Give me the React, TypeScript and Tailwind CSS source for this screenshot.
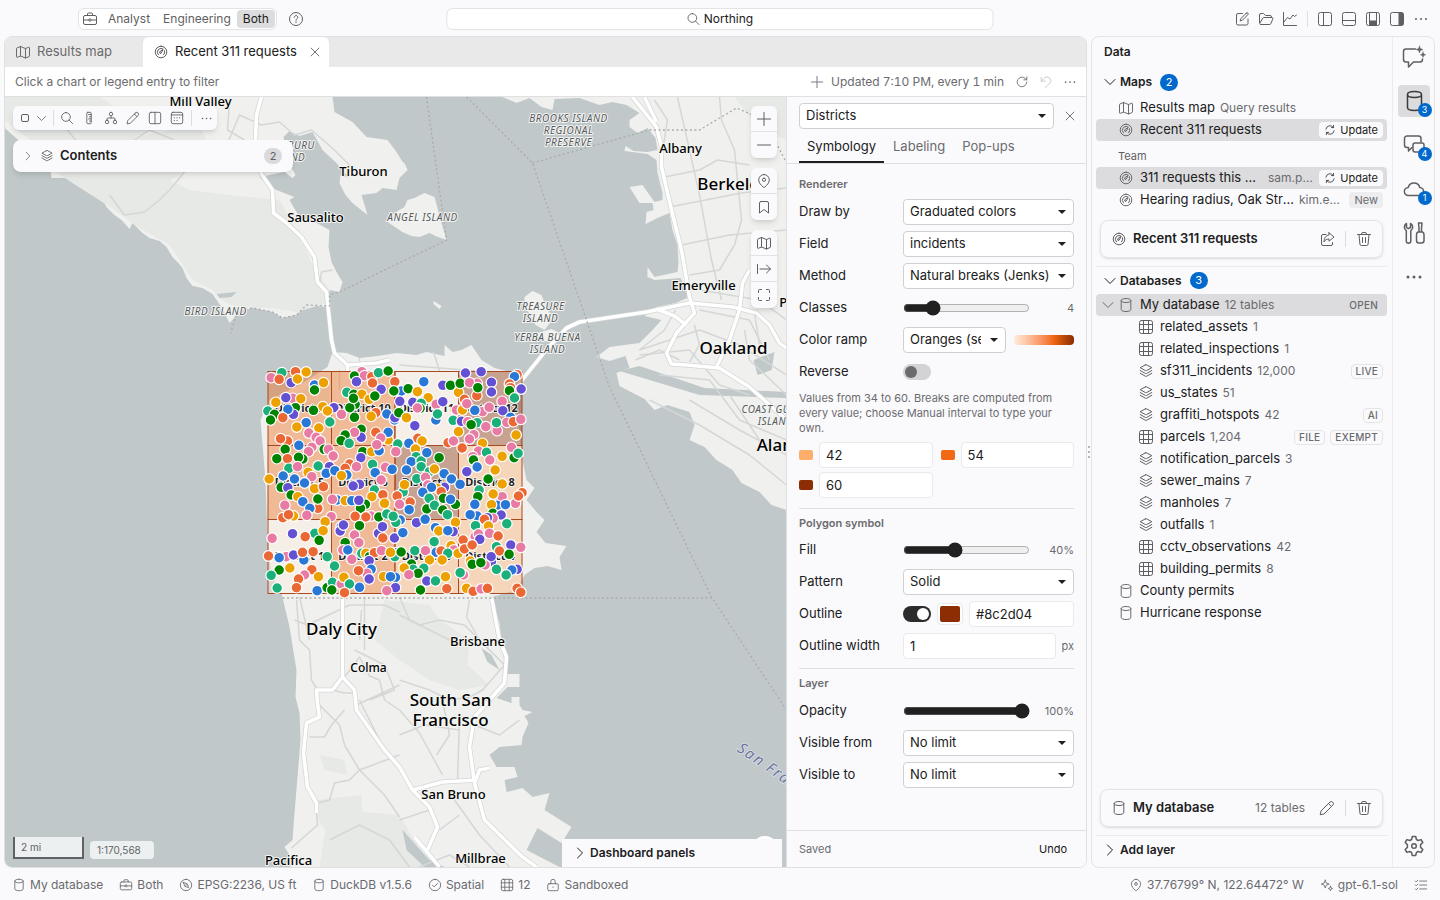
import React, { useState } from "react";
import clsx from "clsx";

const ICONS: Record<string, string> = {
  map: "M5.5 2.5 1.9 4a.6.6 0 0 0-.4.6v8.2c0 .4.4.7.8.5l3.2-1.3 5 2 3.6-1.5a.6.6 0 0 0 .4-.6V3.7c0-.4-.4-.7-.8-.5l-3.2 1.3-5-2ZM5.5 2.5V12M10.5 4.5V14",
  dashboard:
    "M8 2.2a5.8 5.8 0 1 0 0 11.6A5.800 5.800 0 0 0 8 2.200ZM5.400 10.800a3.800 3.800 0 0 1 4-6.200M11.500 6.700a3.800 3.800 0 0 1-.9 4.100M7.400 9.300a1 1 0 0 1-.7-1.500l3.500-2.500-1.900 3.700a1 1 0 0 1-.9.300Z",
  close: "m3.5 3.5 9 9M12.5 3.5l-9 9",
  help: "M8 1.5a6.5 6.5 0 1 0 0 13 6.5 6.5 0 0 0 0-13ZM6.2 6.3a1.8 1.8 0 1 1 2.7 1.6c-.6.3-.9.7-.9 1.4M8 10.9v.8",
  briefcase:
    "M3 4.5h10A1.5 1.5 0 0 1 14.5 6v6a1.5 1.5 0 0 1-1.5 1.500H3A1.500 1.500 0 0 1 1.500 12V6A1.500 1.500 0 0 1 3 4.500ZM5.500 4.500V3a1 1 0 0 1 1-1h3a1 1 0 0 1 1 1v1.500M1.500 9h5M9.500 9h5M6.800 9a1.200 1.200 0 1 0 2.400 0 1.200 1.200 0 1 0-2.400 0",
  search: "M6.800 1.800a5 5 0 1 0 0 10 5 5 0 0 0 0-10ZM10.400 10.400l4 4",
  edit: "M8.500 2.500H4A1.500 1.500 0 0 0 2.500 4v8.500A1.500 1.500 0 0 0 4 14h8.500a1.500 1.500 0 0 0 1.500-1.500V8M12.300 2.100a1 1 0 0 1 1.600 1.500L8.500 9.200l-2.300.8.700-2.400 5.400-5.500Z",
  folder:
    "M1.500 11.500V4A1.500 1.500 0 0 1 3 2.500h2.500L7.500 4.500H12A1.500 1.500 0 0 1 13.500 6v.500M3 13.500h8.800a1 1 0 0 0 .9-.6l2-4.600a1.300 1.300 0 0 0-1.200-1.800H5.700a1 1 0 0 0-.9.600L1.800 12.200A1 1 0 0 0 3 13.500Z",
  graph: "M1.500 1.500v13h13M2 11l3.500-4.500L8 8l3-4 1.500 1.500L14.500 4",
  columns:
    "M3.500 1.500h9a2 2 0 0 1 2 2v9a2 2 0 0 1-2 2h-9a2 2 0 0 1-2-2v-9a2 2 0 0 1 2-2ZM6.500 1.500v13",
  split:
    "M3.500 1.500h9a2 2 0 0 1 2 2v9a2 2 0 0 1-2 2h-9a2 2 0 0 1-2-2v-9a2 2 0 0 1 2-2ZM8 1.500v13",
  panel:
    "M3.500 1.500h9a2 2 0 0 1 2 2v9a2 2 0 0 1-2 2h-9a2 2 0 0 1-2-2v-9a2 2 0 0 1 2-2ZM1.500 9.500h13",
  frame:
    "M3.500 1.500h9a2 2 0 0 1 2 2v9a2 2 0 0 1-2 2h-9a2 2 0 0 1-2-2v-9a2 2 0 0 1 2-2Z",
  plus: "M8 1.500v13M1.500 8h13",
  minus: "M1.500 8h13",
  refresh: "M13.500 8a5.500 5.500 0 1 1-1.800-4.100L13.500 5.500M13.500 2v3.500H10",
  sync: "M2.500 7A5.600 5.600 0 0 1 12.500 4.500M12.800 1.800v3H9.800M13.500 9a5.600 5.600 0 0 1-10 2.500M3.200 14.200v-3h3",
  undo: "M2.500 2.500v4.500H7M2.500 7l3.700-3.500a4.200 4.200 0 1 1 6 6L7 14.500",
  down: "m3 5.500 5 5 5-5",
  right: "m5.500 3 5 5-5 5",
  layers:
    "M7.500 1.800a1 1 0 0 1 1 0L13.800 4.700 8.500 7.600a1 1 0 0 1-1 0L2.200 4.700l5.300-2.900ZM2.200 7.500l5.300 3a1 1 0 0 0 1 0l5.300-3M2.200 10.300l5.300 3a1 1 0 0 0 1 0l5.300-3",
  ruler:
    "M6.500 1.500h3a1 1 0 0 1 1 1v11a1 1 0 0 1-1 1h-3a1 1 0 0 1-1-1v-11a1 1 0 0 1 1-1ZM7.500 4h3M8.500 6.500h2M7.500 9h3M8.500 11.500h2",
  tree: "M8 1.500a2 2 0 1 0 0 4 2 2 0 0 0 0-4ZM3.500 10.500a2 2 0 1 0 0 4 2 2 0 0 0 0-4ZM12.500 10.500a2 2 0 1 0 0 4 2 2 0 0 0 0-4ZM8 5.500V8M3.500 10.500V9a1 1 0 0 1 1-1h7a1 1 0 0 1 1 1v1.500",
  pencil:
    "M10.800 2.200a2.100 2.100 0 0 1 3 3L5 14l-3.800.8L2 11l8.800-8.800ZM9.500 3.500l3 3",
  calendar:
    "M3.500 1.500h9a2 2 0 0 1 2 2v9a2 2 0 0 1-2 2h-9a2 2 0 0 1-2-2v-9a2 2 0 0 1 2-2ZM1.500 4.500h13M4.800 7.800h.4M7.800 7.800h.4M10.800 7.800h.4M4.800 10.800h.4M7.800 10.800h.4",
  pin: "M8 1.500a5.300 5.300 0 0 1 5.300 5.300c0 2.800-2 5-4.500 7.300a1.200 1.200 0 0 1-1.600 0C4.700 11.800 2.700 9.600 2.700 6.800A5.300 5.300 0 0 1 8 1.500ZM8 5.200a1.600 1.600 0 1 0 0 3.200 1.600 1.600 0 0 0 0-3.200Z",
  bookmark: "M5 2.500h6A1.500 1.500 0 0 1 12.500 4v10L8 10.500 3.500 14V4A1.500 1.500 0 0 1 5 2.500Z",
  tab: "M1.500 3.500v9M4 8h10.500M10.500 4l4 4-4 4",
  fullscreen:
    "M2.500 5.500v-2a1 1 0 0 1 1-1h2M10.500 2.500h2a1 1 0 0 1 1 1v2M13.500 10.500v2a1 1 0 0 1-1 1h-2M5.500 13.500h-2a1 1 0 0 1-1-1v-2",
  database:
    "M8 1.500c2.800 0 4.800.8 4.800 2s-2 2-4.800 2-4.800-.8-4.800-2 2-2 4.800-2ZM3.200 3.500v9c0 1.200 2 2 4.800 2s4.800-.8 4.800-2v-9",
  table:
    "M3.500 1.500h9a2 2 0 0 1 2 2v9a2 2 0 0 1-2 2h-9a2 2 0 0 1-2-2v-9a2 2 0 0 1 2-2ZM1.500 5.500h13M1.500 10.500h13M5.500 1.500v13M10.500 1.500v13",
  share:
    "M7 3.500H4A1.500 1.500 0 0 0 2.500 5v8A1.500 1.500 0 0 0 4 14.500h8A1.500 1.500 0 0 0 13.500 13v-1.500M10 1.800 15 6l-5 4.200V8C7.500 8 6 9 5 11c0-4 2-6.700 5-7V1.800Z",
  trash:
    "M1.500 3.500h13M5.500 3.500V3a1.500 1.500 0 0 1 1.500-1.500h2A1.500 1.500 0 0 1 10.500 3v.500M3 3.500l.9 9.500A1.500 1.500 0 0 0 5.400 14.500h5.200a1.500 1.500 0 0 0 1.500-1.500L13 3.500M6.500 6.500v5M9.500 6.500v5",
  compass:
    "M8 1.500a6.500 6.500 0 1 0 0 13 6.500 6.500 0 0 0 0-13ZM5 5l4.500 1.700L11 11 6.600 9.500 5 5ZM7.500 8h1",
  check: "M8 1.500a6.500 6.500 0 1 0 0 13 6.500 6.500 0 0 0 0-13ZM5 8.200l2 2 4-4",
  lock: "M3.500 6.500h9A1.500 1.500 0 0 1 14 8v5a1.500 1.500 0 0 1-1.500 1.500h-9A1.500 1.500 0 0 1 2 13V8a1.500 1.500 0 0 1 1.500-1.500ZM5.500 6.500V4a2.500 2.500 0 0 1 5 0v2.500M8 10.200v.600",
  sparkle:
    "M6 2.500 7.200 5.800 10.500 7 7.200 8.200 6 11.500 4.800 8.200 1.500 7l3.300-1.200L6 2.500ZM12 9.500l.7 1.800 1.800.7-1.800.7-.7 1.800-.7-1.800-1.800-.7 1.800-.7.7-1.800Z",
  checklist: "M6.500 3.500h8M6.500 8h8M6.500 12.500h8M1.500 3.500l1 1 2-2M1.500 8l1 1 2-2M1.500 12.500l1 1 2-2",
};

function Icon({ name, size = 16, className }: { name: string; size?: number; className?: string }) {
  return (
    <svg
      viewBox="0 0 16 16"
      width={size}
      height={size}
      fill="none"
      stroke="currentColor"
      strokeWidth="1"
      strokeLinecap="round"
      strokeLinejoin="round"
      className={clsx("shrink-0", className)}
      aria-hidden="true"
    >
      <path d={ICONS[name]} />
    </svg>
  );
}

function Dots({ size = 14 }: { size?: number }) {
  return (
    <svg viewBox="0 0 16 16" width={size} height={size} fill="currentColor" className="shrink-0" aria-hidden="true">
      <circle cx="3" cy="8" r="1" />
      <circle cx="8" cy="8" r="1" />
      <circle cx="13" cy="8" r="1" />
    </svg>
  );
}

/* ---------- map ---------- */

const DOT_COLORS: Record<string, string> = {
  p: "#e87ba4",
  o: "#eb6834",
  y: "#eda100",
  g: "#008300",
  t: "#1baf7a",
  b: "#2a78d6",
  v: "#6350d2",
};

// colour key followed by x,y in thirds of a pixel, measured from the grid's corner
const INCIDENTS =
  "t82,38 o123,35 p50,53 o74,58 y155,36 v110,68 y129,57 b180,75 g180,90 y207,68 p322,35 g300,48 p330,47 o352,50 t372,38 g401,33 v306,65 o354,69 o421,65 v380,88 t277,97 g298,103 y322,103 y344,118 g361,108 b508,65 b441,93 g418,93 g461,86 y489,95 y521,113 v565,76 y612,97 g588,76 g617,70 v633,39 v680,35 p668,70 p645,68 o667,107 g670,83 v711,67 v711,96 o788,44 b780,50 o765,72 o768,83 v800,87 g765,92 t780,114 p743,124 " +
  "p115,115 v94,113 y64,127 y139,116 g123,143 v117,163 b100,148 t40,153 g60,163 g48,180 o85,173 y205,140 v238,143 g177,151 y219,153 p261,163 b155,188 t226,186 y127,201 y193,204 p163,219 g302,133 g286,143 g297,115 g300,172 o364,158 y350,169 b397,162 b420,180 v421,173 g433,158 y456,173 v436,124 v475,127 t500,130 g497,145 p489,144 b544,180 p545,133 t549,162 v565,125 v481,197 o630,118 p606,150 y624,150 p637,131 p684,155 b661,151 p704,142 v745,152 " +
  "t596,181 v621,184 p640,185 t668,188 g650,194 p694,200 p728,212 t726,188 b768,172 p757,187 o777,185 p799,178 y785,225 y612,215 p658,224 p645,237 o581,248 p597,243 y684,250 o623,264 p771,262 g779,293 t791,280 y743,289 p672,273 t696,277 p655,290 g657,300 p706,300 b668,321 y722,330 v637,335 " +
  "o99,243 o78,236 p185,232 p197,243 g92,268 b133,256 p172,262 g209,268 p162,275 g67,296 o99,296 g145,297 g132,292 t103,325 p129,320 p222,268 p236,288 t191,318 g320,208 v320,232 p300,217 g272,225 g260,242 t284,250 o364,217 y401,240 b401,217 p379,234 g325,275 y352,275 b374,272 p367,254 t430,252 p424,275 o490,235 b463,250 y503,243 y483,267 g554,293 " +
  "t485,290 b470,305 t500,303 b517,278 v319,293 o285,312 o272,325 p306,320 t354,313 p393,322 b362,338 b413,328 t500,320 b456,330 t525,335 y540,327 b569,341 t487,356 p513,352 b591,357 b617,373 " +
  "y44,357 b86,348 b120,357 g80,382 v100,383 y161,337 p172,350 b150,369 v225,320 b215,340 b241,332 b277,345 y261,347 y180,386 o207,380 g110,405 y130,410 p91,436 b145,425 o190,445 b166,445 g190,417 b248,420 p234,418 y117,468 o85,473 o102,464 p157,466 v315,373 v296,378 p380,360 t360,390 y352,410 o385,404 y390,430 y272,422 b292,422 g333,433 g318,445 v313,421 t446,396 y450,374 p520,375 v570,382 y548,385 o560,395 b531,382 b505,397 o428,408 o467,426 p435,433 b464,449 t524,415 g567,415 g517,447 t540,436 g565,450 g603,433 b588,418 " +
  "t674,390 g670,410 b661,433 b668,468 b647,464 p743,410 y716,402 b728,436 y711,434 y743,372 g701,357 p783,430 o803,398 o792,408 b753,434 g715,460 v740,465 p716,475 v699,473 p350,468 o302,469 o334,471 g373,471 t397,462 p230,470 y212,485 b260,500 v257,513 v267,495 g315,497 t181,520 y206,512 p53,535 v114,521 o152,530 g194,541 p300,525 g272,548 p313,548 b437,480 t424,487 t416,469 v372,520 v384,500 o385,534 v420,534 b445,518 v486,488 b512,478 t579,464 b543,503 y603,487 y553,513 v596,515 b580,512 t539,545 o690,478 t663,497 y702,498 t757,491 p705,520 p662,530 p672,522 o731,528 v676,538 o626,540 y590,557 " +
  "p95,590 o42,588 b74,593 b148,600 v117,585 o144,577 o176,575 t218,590 t240,618 g74,630 t50,646 y106,624 o172,629 p150,645 y192,650 o132,657 t68,684 o126,683 b188,692 g218,683 t234,667 g232,690 p260,672 y268,652 t285,672 o270,698 b315,682 p265,570 b280,570 p292,598 t322,580 y334,580 g345,590 o360,578 v344,602 b350,628 p337,640 o312,632 v344,657 p381,572 b425,578 t421,590 y408,577 g440,576 t481,572 b545,577 p513,572 p598,570 o560,573 t580,580 y525,600 y563,600 g471,612 t508,625 t476,628 y449,624 g491,640 p463,644 y387,650 b423,652 b408,650 v423,683 p397,692 v517,663 g498,690 y573,650 t543,663 o577,686 " +
  "y611,580 o630,567 o653,555 y648,603 g653,613 p627,645 t617,638 t726,560 v769,555 p799,562 o735,573 g764,583 v711,605 v710,590 p692,615 g679,608 t726,628 v788,628 b772,630 t755,645 y636,685 o656,694 p680,687 o699,685 o788,685 o799,697";

const CLASS_COLORS = ["#feedde", "#fdae6b", "#f16913", "#8c2d04"];
const DISTRICT_ROWS = [
  { y: 371, names: [9, 10, 11, 12], classes: [2, 2, 0, 3] },
  { y: 445, names: [5, 6, 7, 8], classes: [2, 2, 3, 1] },
  { y: 519, names: [1, 2, 3, 4], classes: [0, 2, 1, 1] },
];

const LAND = [
  // Marin and Tiburon
  "M5 97V128L18 140L50 165L52 178L72 178L87 183L100 195L107 207L115 215L122 220L130 229L133 223L143 233L150 238L160 241L167 247L173 257L178 262L183 268L187 278L193 286L203 288L213 294L222 307L230 323L233 320L238 312L253 308L273 312L283 318L297 315L307 305L328 307L330 290L340 292L343 282L337 272L332 262L329 247L330 230L317 223L300 217L294 207L290 200L295 197L277 190L268 184L260 177L285 172L293 178L296 175L291 166L296 155L285 142L284 137L290 131L300 136L313 132L323 150L337 163L350 178L341 175L340 183L346 195L353 203L368 215L362 195L377 193L383 188L397 190L400 178L408 170L397 152L388 140L367 137L353 122L335 112L333 97Z",
  // Angel Island and Belvedere
  "M388 222L395 213L405 207L408 200L415 198L425 193L435 197L438 208L441 220L447 240L436 236L430 233L420 237L412 236L403 232Z",
  "M397 160L405 163L408 170L402 173L394 169Z",
  // Treasure Island, Yerba Buena
  "M525 297L533 291L542 295L548 310L554 318L545 330L536 325L525 305ZM538 333L552 329L560 333L552 342L540 340ZM434 301L442 306L440 309L434 304Z",
  // East Bay
  "M503 97L517 103L530 98L542 107L553 110L555 99L580 98L600 105L613 102L627 105L640 113L630 120L630 127L638 133L648 128L656 138L658 150L648 152L634 151L626 146L625 151L633 152L648 154L657 160L658 173L663 193L663 200L655 202L643 185L630 187L640 203L653 203L654 210L647 212L646 224L658 218L670 213L673 230L678 245L679 262L678 272L655 277L648 267L648 277L655 280L681 278L690 297L676 303L657 307L645 316L662 320L653 330L640 343L610 347L597 357L610 361L626 356L630 368L617 373L620 386L645 399L655 410L668 405L690 412L695 425L690 440L705 447L717 460L733 470L742 483L760 492L772 505L787 510V97Z",
  // the peninsula
  "M328 367L333 352L347 353L360 358L378 356L397 353L417 355L427 352L445 356L445 345L453 352L462 350L472 345L482 360L495 368L518 374L522 385L514 400L519 420L522 455L527 480L535 488L527 500L538 513L545 520L537 532L546 543L567 546L560 557L562 570L548 566L535 568L525 575L517 590L492 597L500 623L503 650L507 674L520 674V687H508L497 698L512 703V697H520V705L523 710L533 712L525 716L529 723L523 737L522 745L500 747L490 755L497 767L515 767L518 777L505 780L507 792L523 788L533 797L550 793L545 810L572 827L562 843L538 828L527 850L560 867H291L290 855L285 847L293 840L295 813L298 777L301 740L300 713L296 697L297 670L290 627L282 593L272 575L268 540L266 480L261 420L270 400L300 385Z",
];

const PARKS = [
  "M45 165L110 150L190 190L230 195L280 200L300 235L313 265L330 290L328 303L297 312L273 308L238 308L222 300L213 290L193 280L170 245L140 228L112 208Z",
  "M5 97H100L150 130L100 170L50 155L5 120Z",
  "M120 140L200 125L215 160L170 180L130 172Z",
  "M270 400L330 395V405H270Z",
  "M385 600L430 605L440 620L470 640L468 665L490 685L460 690L430 680L400 660L375 640Z",
  "M318 800L362 795L363 812L400 815L430 867H320L326 830L318 820Z",
  "M320 755L345 760L348 775L325 770Z",
  "M735 97L787 97V140L760 130Z",
  "M300 390L330 380L330 400L300 402Z",
];

const MINOR_ROADS = [
  "M60 120L80 145L120 150L150 130L175 140M110 195L125 215L145 212L160 200L170 190L185 172",
  "M225 150L240 115L262 125L280 122L295 135L312 130L335 150L350 165",
  "M230 100L228 130L245 140M320 285L322 272L333 270",
  "M655 100L668 120L664 145M720 97L722 120L735 150L738 180L742 220L735 245L720 270L690 275",
  "M678 97L690 150L700 195L712 260L722 300M665 177L700 170L718 160L750 165M670 207L742 193L787 188",
  "M682 245L730 235L787 230M700 290L760 300L787 320M640 350L700 330L740 345L787 375",
  "M640 355L690 350L720 385L750 395M660 375L710 380L740 420L787 440M700 310L750 320L770 360",
  "M636 360L660 350L680 360M650 400L700 425L750 455L787 485M690 400L740 430L787 455M730 395L760 440",
  "M676 310L665 330L640 350M695 325L700 345L690 362M745 330L750 360L787 395M755 313L760 345",
  "M295 620L308 625L350 605M297 600L300 640L310 650L312 680L318 690M350 605H385L400 612",
  "M333 690L345 693H356M345 677L360 657L370 676L380 680L385 700L400 710M360 640L362 610",
  "M355 650L385 665L395 690L370 700M357 705L400 685M360 700L385 750M318 703L340 725L345 745L360 770L385 795L400 817",
  "M310 737H325L332 725L345 710M400 755L360 770L350 780L335 783L330 800L317 803",
  "M292 848L318 825L317 813M400 615L420 625L440 620L465 625L475 635",
  "M400 680L430 690L450 700L470 697M400 710L420 733L443 775M443 700L450 735L437 755M475 725L500 735L520 720",
  "M400 735L425 725L460 730M455 800L480 835L510 867M440 830L460 815M460 720L458 780",
  "M470 600L467 617L480 640L505 665M505 665L483 690L465 700M400 820L430 810M340 370V390M360 358V380M434 352L440 371M400 365L480 371",
  "M330 840L360 825L390 840L410 867M420 867L450 855L470 867M365 597V650M400 597L410 620L450 640M300 597L310 640",
];

const HIGHWAYS = [
  "M262 97L257 115L256 140L262 174L273 190L274 213L287 223L302 237L315 257L318 282L327 292L332 340L335 353L348 365L377 363L390 360M348 365V372",
  "M517 387L545 352L567 328L580 322L647 312L690 303L733 307L757 313L770 325L780 343L787 348",
  "M633 97L657 127L662 147L662 167L672 210L682 250L690 297L695 313L677 333L667 353L672 364L687 365L720 368L750 387L787 420",
  "M645 97L657 122M657 309L675 316L687 325M750 270L743 283L740 310L730 340L717 367",
  "M343 597V657V677L333 690L317 690L318 703L320 717L307 723L304 753L308 787L317 803L317 813",
  "M343 677L355 690L357 710L385 750L400 767L413 790L430 807L438 827L428 850M413 790L443 782L477 780",
  "M415 837L440 867",
  "M492 597L500 640L507 657L505 683L475 717L470 747L475 783L485 820L523 857L537 867M475 783L480 770L490 768",
];

const BOUNDARIES = [
  "M427 97L447 240L340 292L330 295V306L307 305L297 315L283 318L273 312L253 308L238 312L231 333",
  "M467 97L533 163L610 387L712 597L787 710M533 163L650 130L700 130L737 108L765 120L787 163",
  "M283 598H712",
];

type MapLabel = { x: number; y: number; lines: string[]; kind: "town" | "small" | "city" | "area" };

const MAP_LABELS: MapLabel[] = [
  { x: 201, y: 106, lines: ["Mill Valley"], kind: "town" },
  { x: 364, y: 176, lines: ["Tiburon"], kind: "town" },
  { x: 316, y: 222, lines: ["Sausalito"], kind: "town" },
  { x: 681, y: 153, lines: ["Albany"], kind: "town" },
  { x: 704, y: 290, lines: ["Emeryville"], kind: "town" },
  { x: 478, y: 646, lines: ["Brisbane"], kind: "town" },
  { x: 454, y: 799, lines: ["San Bruno"], kind: "town" },
  { x: 481, y: 863, lines: ["Millbrae"], kind: "town" },
  { x: 289, y: 865, lines: ["Pacifica"], kind: "town" },
  { x: 810, y: 307, lines: ["Piedmont"], kind: "town" },
  { x: 369, y: 672, lines: ["Colma"], kind: "small" },
  { x: 734, y: 354, lines: ["Oakland"], kind: "city" },
  { x: 733, y: 190, lines: ["Berkeley"], kind: "city" },
  { x: 793, y: 451, lines: ["Alameda"], kind: "city" },
  { x: 342, y: 635, lines: ["Daly City"], kind: "city" },
  { x: 451, y: 706, lines: ["South San", "Francisco"], kind: "city" },
  { x: 569, y: 122, lines: ["BROOKS ISLAND", "REGIONAL", "PRESERVE"], kind: "area" },
  { x: 423, y: 221, lines: ["ANGEL ISLAND"], kind: "area" },
  { x: 216, y: 315, lines: ["BIRD ISLAND"], kind: "area" },
  { x: 541, y: 310, lines: ["TREASURE", "ISLAND"], kind: "area" },
  { x: 548, y: 341, lines: ["YERBA BUENA", "ISLAND"], kind: "area" },
  { x: 288, y: 149, lines: ["ARAMBURU", "ISLAND"], kind: "area" },
  { x: 776, y: 413, lines: ["COAST GUARD", "ISLAND"], kind: "area" },
];

const LABEL_STYLES = {
  town: "text-[13px] font-medium fill-black",
  small: "text-[12px] font-medium fill-black",
  city: "text-[17px] font-medium fill-black",
  area: "text-[10px] italic tracking-wider fill-[#55595c]",
};
const LABEL_LEADING = { town: 16, small: 15, city: 20, area: 12 };

function MapCanvas() {
  return (
    <svg
      viewBox="5 97 782 770"
      preserveAspectRatio="xMidYMid slice"
      className="block size-full font-['Noto_Sans',sans-serif]"
      role="img"
      aria-label="Map of San Francisco Bay with district classes and incidents"
    >
      <rect x="-800" y="-800" width="2600" height="2600" fill="#c1c8ca" />
      <g fill="#f0f1ee">
        {LAND.map((d) => (
          <path key={d} d={d} />
        ))}
      </g>
      <g fill="#e6e9e6">
        {PARKS.map((d) => (
          <path key={d} d={d} />
        ))}
      </g>
      <g fill="#c1c8ca">
        <path d="M482 648L492 655L500 670L488 662ZM5 128L20 141L5 141ZM403 830L430 860L445 867H425L407 850ZM217 294L237 292L232 297L220 298ZM754 360L775 352L772 370L758 375ZM620 371L700 395L787 398V392L705 388L640 366Z" />
      </g>
      <g fill="none" stroke="#d5d6d6" strokeWidth="1.500" strokeLinejoin="round">
        {MINOR_ROADS.map((d) => (
          <path key={d} d={d} />
        ))}
      </g>
      <g fill="none" stroke="#d3d5d5" strokeWidth="5" strokeLinejoin="round">
        {HIGHWAYS.map((d) => (
          <path key={d} d={d} />
        ))}
      </g>
      <g fill="none" stroke="#fff" strokeWidth="3.600" strokeLinejoin="round">
        {HIGHWAYS.map((d) => (
          <path key={d} d={d} />
        ))}
      </g>
      <g fill="none" stroke="#aaaaac" strokeWidth="1.300" strokeDasharray="2 2.500">
        {BOUNDARIES.map((d) => (
          <path key={d} d={d} />
        ))}
      </g>

      {DISTRICT_ROWS.map((row) =>
        row.classes.map((c, i) => (
          <rect
            key={row.names[i]}
            x={268.5 + i * 63.5}
            y={row.y + 0.5}
            width="63.5"
            height="74"
            fill={CLASS_COLORS[c]}
            fillOpacity="0.4"
            stroke="#a8491f"
            strokeWidth="1"
          />
        ))
      )}
      <g
        className="text-[11px] font-bold"
        textAnchor="middle"
        stroke="#fff"
        strokeWidth="1.500"
        paintOrder="stroke"
        fill="#1f1f1f"
      >
        {DISTRICT_ROWS.map((row) =>
          row.names.map((n, i) => (
            <text key={n} x={300 + i * 63.5} y={row.y + 41}>
              District {n}
            </text>
          ))
        )}
      </g>

      <g transform="translate(255 360) scale(0.3333)" stroke="#fff" strokeWidth="3.600">
        {INCIDENTS.split(" ").map((dot) => {
          const [x, y] = dot.slice(1).split(",");
          return <circle key={dot} cx={x} cy={y} r="16" fill={DOT_COLORS[dot[0]]} />;
        })}
      </g>

      <g textAnchor="middle" stroke="#f4f5f3" strokeWidth="2" strokeLinejoin="round" paintOrder="stroke">
        {MAP_LABELS.map((label) => (
          <text key={label.lines.join(" ")} className={LABEL_STYLES[label.kind]}>
            {label.lines.map((line, i) => (
              <tspan key={line} x={label.x} y={label.y + i * LABEL_LEADING[label.kind]}>
                {line}
              </tspan>
            ))}
          </text>
        ))}
      </g>
      <path id="bay" d="M737 751Q775 775 830 818" fill="none" />
      <text
        className="text-[15px] italic tracking-widest"
        fill="#6a759c"
        stroke="#dfe3ea"
        strokeWidth="1.500"
        paintOrder="stroke"
      >
        <textPath href="#bay">San Francisco</textPath>
      </text>
    </svg>
  );
}

const MAP_TOOLS = [
  { icon: "search", label: "Search" },
  { icon: "ruler", label: "Measure" },
  { icon: "tree", label: "Network" },
  { icon: "pencil", label: "Draw" },
  { icon: "split", label: "Compare" },
  { icon: "calendar", label: "Time" },
];

const MAP_CONTROLS = [
  [
    { icon: "plus", label: "Zoom in" },
    { icon: "minus", label: "Zoom out" },
  ],
  [
    { icon: "pin", label: "My location" },
    { icon: "bookmark", label: "Bookmarks" },
  ],
  [
    { icon: "map", label: "Basemap" },
    { icon: "tab", label: "Go to" },
    { icon: "fullscreen", label: "Full screen" },
  ],
];

function MapView() {
  return (
    <div className="relative min-w-0 flex-1 overflow-hidden">
      <MapCanvas />

      <div className="absolute top-[9px] left-[8px] flex flex-col items-start gap-[10px]">
        <div className="flex h-6 items-center rounded-md bg-[#fafafd] pl-1 text-[#5f5f61] shadow-md">
          <button type="button" aria-label="Select" className="flex w-9 items-center justify-between pr-[5px] pl-1">
            <svg viewBox="0 0 8 8" width="8" height="8" fill="none" stroke="currentColor" aria-hidden="true">
              <rect x="0.500" y="0.500" width="7" height="7" rx="1.500" />
            </svg>
            <Icon name="down" size={13} />
          </button>
          <span className="mr-[2px] h-4 w-px bg-[#dcdcde]" />
          {MAP_TOOLS.map((tool) => (
            <button key={tool.label} type="button" aria-label={tool.label} className="flex w-[22px] justify-center">
              <Icon name={tool.icon} size={14} />
            </button>
          ))}
          <span className="mx-[3px] h-4 w-px bg-[#dcdcde]" />
          <button type="button" aria-label="More tools" className="flex w-[22px] justify-center">
            <Dots size={13} />
          </button>
        </div>
        <button
          type="button"
          className="flex h-8 w-[280px] items-center rounded-lg bg-[#fafafd] pr-[11px] pl-[9px] text-left text-[#5f5f61] shadow-md"
        >
          <Icon name="right" size={12} />
          <Icon name="layers" size={14} className="ml-[6px]" />
          <span className="ml-[6px] flex-1 text-[13px] font-semibold text-[#202020]">Contents</span>
          <span className="flex h-4 w-[18px] items-center justify-center rounded-full bg-[#dadadc] text-[11px]">2</span>
        </button>
      </div>

      <div className="absolute top-[9px] right-[9px] flex flex-col gap-[10px]">
        {MAP_CONTROLS.map((group) => (
          <div
            key={group[0].label}
            className="flex flex-col divide-y divide-[#e2e2e5] rounded-md bg-[#fafafd] text-[#5f5f61] shadow-md"
          >
            {group.map((control) => (
              <button
                key={control.label}
                type="button"
                aria-label={control.label}
                className="flex h-[26px] w-[26px] items-center justify-center"
              >
                <Icon name={control.icon} />
              </button>
            ))}
          </div>
        ))}
      </div>

      <div className="absolute bottom-[8px] left-[8px] flex items-end gap-[6px] text-[10px] text-[#5f6366]">
        <div className="flex h-[22px] w-[71px] items-center border-2 border-t-0 border-[#5f6366] bg-[#edf0f0] pl-[6px]">
          2 mi
        </div>
        <div className="flex h-[18px] w-[64px] items-center rounded bg-[#edf0f0] pl-[7px]">1:170,568</div>
      </div>

      <div className="absolute right-[8px] bottom-[5px] size-[26px] rounded-full bg-white shadow-md" />
      <button
        type="button"
        className="absolute right-[4px] bottom-0 flex h-7 w-[220px] items-center bg-[#fafafd] pl-[10px] text-[12px] font-semibold text-[#202020]"
      >
        <Icon name="right" className="mr-[2px]" />
        Dashboard panels
      </button>
    </div>
  );
}

/* ---------- symbology ---------- */

function Select({ id, value, className, label }: { id: string; value: string; className?: string; label?: string }) {
  return (
    <div className={clsx("relative", className)}>
      <select
        id={id}
        aria-label={label}
        className="block h-[26px] w-full appearance-none rounded border border-[#d0d0d3] bg-white pr-6 pl-[6px] text-[13px] text-[#202020]"
      >
        <option>{value}</option>
      </select>
      <svg
        viewBox="0 0 8 4"
        width="8"
        height="4"
        fill="#202020"
        className="pointer-events-none absolute top-[11px] right-[8px]"
        aria-hidden="true"
      >
        <path d="M0 0h8L4 4Z" />
      </svg>
    </div>
  );
}

function Row({ id, label, children }: { id: string; label: string; children: React.ReactNode }) {
  return (
    <div className="flex h-[26px] items-center">
      <label htmlFor={id} className="w-[104px] shrink-0">
        {label}
      </label>
      <div className="flex min-w-0 flex-1 items-center">{children}</div>
    </div>
  );
}

function Slider(props: { id: string; min: number; max: number; start: number; unit: string }) {
  const [value, setValue] = useState(props.start);
  return (
    <>
      <input
        id={props.id}
        type="range"
        min={props.min}
        max={props.max}
        value={value}
        onChange={(e) => setValue(Number(e.target.value))}
        className="w-[127px] accent-[#202020]"
      />
      <span className="flex-1 text-right text-[11px] text-[#6b6b6d]">
        {value}
        {props.unit}
      </span>
    </>
  );
}

function Toggle({ id, start }: { id: string; start: boolean }) {
  const [on, setOn] = useState(start);
  return (
    <input
      id={id}
      type="checkbox"
      role="switch"
      checked={on}
      onChange={() => setOn(!on)}
      className="h-4 w-7 shrink-0 appearance-none rounded-full bg-[#d3d3d6] p-[2px] before:block before:size-3 before:rounded-full before:bg-[#6b6b6d] checked:bg-[#2b2b2b] checked:before:ml-3 checked:before:bg-white"
    />
  );
}

const BREAKS = [
  { color: "bg-[#fdae6b]", value: "42" },
  { color: "bg-[#f16913]", value: "54" },
  { color: "bg-[#8c2d04]", value: "60" },
];

const inputStyle = "h-[26px] min-w-0 rounded border border-[#e9e9ec] bg-white px-[6px] text-[13px] text-[#202020]";
const headingStyle = "text-[11px] leading-4 font-semibold text-[#6b6b6d]";

function Symbology() {
  return (
    <section className="flex w-[300px] shrink-0 flex-col border-l border-[#e0e0e3] bg-[#fafafd] text-[13px]">
      <div className="flex items-center justify-between px-3 pt-[6px]">
        <Select id="layer" label="Layer" value="Districts" className="w-[255px]" />
        <button type="button" aria-label="Close panel" className="text-[#5f5f61]">
          <Icon name="close" size={14} className="-mr-[3px]" />
        </button>
      </div>
      <div role="tablist" className="flex h-[35px] gap-px border-b border-[#e0e0e3] px-3 text-[#6b6b6d]">
        <button
          type="button"
          role="tab"
          aria-selected="true"
          className="border-b-2 border-[#202020] px-2 pt-1 text-[#202020]"
        >
          Symbology
        </button>
        <button type="button" role="tab" aria-selected="false" className="border-b-2 border-transparent px-2 pt-1">
          Labeling
        </button>
        <button type="button" role="tab" aria-selected="false" className="border-b-2 border-transparent px-2 pt-1">
          Pop-ups
        </button>
      </div>

      <div className="flex flex-1 flex-col px-3 text-[#202020]">
        <h3 className={clsx(headingStyle, "mt-3 mb-[7px]")}>Renderer</h3>
        <div className="flex flex-col gap-[6px]">
          <Row id="draw-by" label="Draw by">
            <Select id="draw-by" value="Graduated colors" className="flex-1" />
          </Row>
          <Row id="field" label="Field">
            <Select id="field" value="incidents" className="flex-1" />
          </Row>
          <Row id="method" label="Method">
            <Select id="method" value="Natural breaks (Jenks)" className="flex-1" />
          </Row>
          <Row id="classes" label="Classes">
            <Slider id="classes" min={2} max={12} start={4} unit="" />
          </Row>
          <Row id="ramp" label="Color ramp">
            <Select id="ramp" value="Oranges (sequential)" className="w-[103px]" />
            <span className="ml-2 h-[10px] flex-1 rounded-sm bg-linear-to-r from-[#feedde] via-[#f16913] via-65% to-[#8c2d04]" />
          </Row>
          <Row id="reverse" label="Reverse">
            <Toggle id="reverse" start={false} />
          </Row>
        </div>
        <p className="mt-[6px] text-[11px] leading-[15px] text-[#6b6b6d]">
          Values from 34 to 60. Breaks are computed from every value; choose Manual interval to type your own.
        </p>
        <div className="mt-[6px] grid grid-cols-2 gap-x-2 gap-y-1">
          {BREAKS.map((b) => (
            <div key={b.value} className="flex items-center gap-[6px]">
              <span className={clsx("h-[10px] w-[14px] shrink-0 rounded-[2px]", b.color)} />
              <input aria-label={"Upper value " + b.value} defaultValue={b.value} className={clsx(inputStyle, "w-full")} />
            </div>
          ))}
        </div>

        <h3 className={clsx(headingStyle, "mt-[10px] mb-[6px] border-t border-[#e0e0e3] pt-[6px]")}>Polygon symbol</h3>
        <div className="flex flex-col gap-[6px]">
          <Row id="fill" label="Fill">
            <Slider id="fill" min={0} max={100} start={40} unit="%" />
          </Row>
          <Row id="pattern" label="Pattern">
            <Select id="pattern" value="Solid" className="flex-1" />
          </Row>
          <Row id="outline" label="Outline">
            <Toggle id="outline" start />
            <input
              type="color"
              aria-label="Outline color"
              defaultValue="#8c2d04"
              className="mx-[6px] h-[22px] w-[26px] shrink-0 appearance-none rounded border border-[#e9e9ec] bg-white p-[2px] [&::-webkit-color-swatch]:rounded-[2px] [&::-webkit-color-swatch]:border-0 [&::-webkit-color-swatch-wrapper]:p-0"
            />
            <input aria-label="Outline hex" defaultValue="#8c2d04" className={clsx(inputStyle, "flex-1")} />
          </Row>
          <Row id="outline-width" label="Outline width">
            <input id="outline-width" defaultValue="1" className={clsx(inputStyle, "flex-1")} />
            <span className="ml-[6px] text-[11px] text-[#6b6b6d]">px</span>
          </Row>
        </div>

        <h3 className={clsx(headingStyle, "mt-[9px] mb-[7px] border-t border-[#e0e0e3] pt-[6px]")}>Layer</h3>
        <div className="flex flex-col gap-[6px]">
          <Row id="opacity" label="Opacity">
            <Slider id="opacity" min={0} max={100} start={100} unit="%" />
          </Row>
          <Row id="visible-from" label="Visible from">
            <Select id="visible-from" value="No limit" className="flex-1" />
          </Row>
          <Row id="visible-to" label="Visible to">
            <Select id="visible-to" value="No limit" className="flex-1" />
          </Row>
        </div>
      </div>

      <div className="flex h-[37px] items-center justify-between border-t border-[#e0e0e3] px-3 text-[11px] text-[#6b6b6d]">
        Saved
        <button type="button" className="px-[7px] text-[#202020]">
          Undo
        </button>
      </div>
    </section>
  );
}

function Editor() {
  return (
    <main className="flex min-w-0 flex-1 flex-col overflow-hidden rounded-lg border border-[#e0e0e3] bg-white">
      <div role="tablist" className="flex h-[30px] bg-[#e9e9e9] text-[13px]">
        <button type="button" role="tab" aria-selected="false" className="flex w-[138px] items-center gap-[6px] pl-[10px] text-[#6b6b6d]">
          <Icon name="map" />
          Results map
        </button>
        <div className="flex w-[186px] items-center rounded-t-md bg-white pr-[7px] pl-[10px]">
          <button type="button" role="tab" aria-selected="true" className="flex flex-1 items-center gap-[6px] text-[#202020]">
            <Icon name="dashboard" className="text-[#5f5f61]" />
            Recent 311 requests
          </button>
          <button type="button" aria-label="Close tab" className="text-[#5f5f61]">
            <Icon name="close" size={14} />
          </button>
        </div>
      </div>
      <div className="flex h-[30px] items-center border-b border-[#e0e0e3] pr-[9px] pl-[10px] text-[12px] text-[#6b6b6d]">
        <span className="flex-1">Click a chart or legend entry to filter</span>
        <button type="button" aria-label="Add panel" className="mr-[7px]">
          <Icon name="plus" size={14} />
        </button>
        <span className="tabular-nums">Updated 7:10 PM, every 1 min</span>
        <button type="button" aria-label="Refresh" className="ml-[11px]">
          <Icon name="refresh" size={14} />
        </button>
        <button type="button" aria-label="Undo filter" className="ml-[10px] text-[#c5c5c7]">
          <Icon name="undo" size={14} />
        </button>
        <button type="button" aria-label="More" className="ml-[10px]">
          <Dots size={14} />
        </button>
      </div>
      <div className="flex min-h-0 flex-1">
        <MapView />
        <Symbology />
      </div>
    </main>
  );
}

/* ---------- data sidebar ---------- */

const TABLES = [
  { icon: "table", name: "related_assets", count: "1", tags: [] },
  { icon: "table", name: "related_inspections", count: "1", tags: [] },
  { icon: "layers", name: "sf311_incidents", count: "12,000", tags: ["LIVE"] },
  { icon: "layers", name: "us_states", count: "51", tags: [] },
  { icon: "layers", name: "graffiti_hotspots", count: "42", tags: ["AI"] },
  { icon: "table", name: "parcels", count: "1,204", tags: ["FILE", "EXEMPT"] },
  { icon: "layers", name: "notification_parcels", count: "3", tags: [] },
  { icon: "layers", name: "sewer_mains", count: "7", tags: [] },
  { icon: "layers", name: "manholes", count: "7", tags: [] },
  { icon: "layers", name: "outfalls", count: "1", tags: [] },
  { icon: "table", name: "cctv_observations", count: "42", tags: [] },
  { icon: "table", name: "building_permits", count: "8", tags: [] },
];

const rowStyle = "flex h-[22px] w-full items-center rounded text-left";

function SectionHeader({ title, count, className }: { title: string; count: string; className?: string }) {
  return (
    <button type="button" className={clsx("flex items-center pl-[6px] text-[12px] font-semibold text-[#202020]", className)}>
      <Icon name="down" className="mr-[2px]" />
      {title}
      <span className="ml-2 flex h-[17px] w-[18px] items-center justify-center rounded-full bg-[#0069cc] text-[11px] font-normal text-white">
        {count}
      </span>
    </button>
  );
}

function UpdateButton() {
  return (
    <button type="button" className="mr-1 flex h-4 shrink-0 items-center gap-1 rounded bg-[#fafafd] px-[5px] text-[11px] text-[#202020]">
      <Icon name="sync" size={12} />
      Update
    </button>
  );
}

function Sidebar() {
  return (
    <section className="flex min-w-0 flex-1 flex-col border-r border-[#ebebee] pr-[5px] pl-1 text-[13px] text-[#202020]">
      <h2 className="flex h-[30px] items-center pl-2 text-[12px] font-semibold">Data</h2>
      <SectionHeader title="Maps" count="2" className="h-[30px]" />
      <button type="button" className={clsx(rowStyle, "pl-[22px]")}>
        <Icon name="map" className="text-[#6b6b6d]" />
        <span className="ml-[6px]">Results map</span>
        <span className="ml-[5px] text-[12px] text-[#6b6b6d]">Query results</span>
      </button>
      <div className={clsx(rowStyle, "bg-[#dcdcdf] pl-[22px]")}>
        <Icon name="dashboard" className="text-[#6b6b6d]" />
        <a href="#recent" className="ml-[6px] flex-1 truncate">
          Recent 311 requests
        </a>
        <UpdateButton />
      </div>
      <h3 className="flex h-[26px] items-center pt-1 pl-[22px] text-[11px] text-[#5f5f61]">Team</h3>
      <div className={clsx(rowStyle, "bg-[#dcdcdf] pl-[22px]")}>
        <Icon name="dashboard" className="text-[#6b6b6d]" />
        <a href="#week" className="ml-[6px] w-[121px] shrink-0 truncate">
          311 requests this week
        </a>
        <span className="ml-[7px] min-w-0 flex-1 truncate text-[12px] text-[#6b6b6d]">sam.parker</span>
        <span className="w-[6px] shrink-0" />
        <UpdateButton />
      </div>
      <div className={clsx(rowStyle, "pl-[22px]")}>
        <Icon name="dashboard" className="text-[#6b6b6d]" />
        <a href="#hearing" className="ml-[6px] w-[155px] shrink-0 truncate">
          Hearing radius, Oak Street
        </a>
        <span className="ml-1 min-w-0 flex-1 truncate text-[12px] text-[#6b6b6d]">kim.ellis</span>
        <span className="mr-1 ml-2 flex h-4 items-center rounded bg-[#ededf0] px-[5px] text-[11px] text-[#6b6b6d]">New</span>
      </div>

      <div className="mt-[9px] mr-1 ml-1 flex h-[38px] items-center rounded-lg border border-[#e4e4e7] pr-[10px] pl-[10px] text-[#5f5f61] shadow-sm">
        <Icon name="dashboard" />
        <span className="ml-[6px] flex-1 font-semibold text-[#202020]">Recent 311 requests</span>
        <button type="button" aria-label="Share">
          <Icon name="share" />
        </button>
        <span className="mx-[10px] h-4 w-px bg-[#dcdcde]" />
        <button type="button" aria-label="Delete map">
          <Icon name="trash" />
        </button>
      </div>

      <SectionHeader title="Databases" count="3" className="mt-2 h-[28px] border-t border-[#ebebee]" />
      <button type="button" className={clsx(rowStyle, "bg-[#dcdcdf] pr-[9px] pl-1")}>
        <Icon name="down" className="text-[#6b6b6d]" />
        <Icon name="database" className="ml-[2px] text-[#6b6b6d]" />
        <span className="ml-[6px]">My database</span>
        <span className="ml-[5px] flex-1 text-[12px] text-[#6b6b6d]">12 tables</span>
        <span className="text-[10px] font-medium tracking-wide text-[#6b6b6d]">OPEN</span>
      </button>
      {TABLES.map((table) => (
        <button key={table.name} type="button" className={clsx(rowStyle, "gap-[5px] pr-1 pl-[42px]")}>
          <Icon name={table.icon} className="mr-px text-[#5f5f61]" />
          <span>{table.name}</span>
          <span className="flex-1 text-[12px] text-[#6b6b6d]">{table.count}</span>
          {table.tags.map((tag) => (
            <span
              key={tag}
              className="flex h-[15px] items-center rounded border border-[#e4e4e7] px-1 text-[10px] font-medium tracking-wide text-[#6b6b6d]"
            >
              {tag}
            </span>
          ))}
        </button>
      ))}
      {["County permits", "Hurricane response"].map((name) => (
        <button key={name} type="button" className={clsx(rowStyle, "gap-[6px] pl-[22px]")}>
          <Icon name="database" className="text-[#6b6b6d]" />
          {name}
        </button>
      ))}

      <div className="flex-1" />
      <div className="mr-1 mb-2 ml-1 flex h-[38px] shrink-0 items-center rounded-lg border border-[#e4e4e7] px-[10px] text-[#5f5f61] shadow-sm">
        <Icon name="database" />
        <span className="ml-[6px] flex-1 font-semibold text-[#202020]">My database</span>
        <span className="mr-[14px] text-[12px] text-[#6b6b6d]">12 tables</span>
        <button type="button" aria-label="Rename">
          <Icon name="pencil" />
        </button>
        <span className="mx-[10px] h-4 w-px bg-[#dcdcde]" />
        <button type="button" aria-label="Delete database">
          <Icon name="trash" />
        </button>
      </div>
      <button type="button" className="mb-1 flex h-[28px] shrink-0 items-center gap-[2px] border-t border-[#ebebee] pl-[6px] text-[12px] font-semibold">
        <Icon name="right" />
        Add layer
      </button>
    </section>
  );
}

function ActivityIcon({ children }: { children: React.ReactNode }) {
  return (
    <svg
      viewBox="0 0 24 24"
      width="24"
      height="24"
      fill="none"
      stroke="currentColor"
      strokeWidth="1.500"
      strokeLinejoin="round"
      strokeLinecap="round"
      aria-hidden="true"
    >
      {children}
    </svg>
  );
}

const ACTIVITIES = [
  {
    label: "Chat",
    art: (
      <>
        <path d="M13.500 4H4A2.500 2.500 0 0 0 1.500 6.500v8A2.500 2.500 0 0 0 4 17h2.500v5l5-5H18a2.500 2.500 0 0 0 2.500-2.500v-.500" />
        <path
          fill="currentColor"
          strokeWidth="0.400"
          d="m17.500 1 .9 2.600 2.600.9-2.600.9-.9 2.600-.9-2.600-2.600-.9 2.600-.9.9-2.600ZM21 7l.8 2 2 .8-2 .8-.8 2-.8-2-2-.8 2-.8.8-2Z"
        />
      </>
    ),
  },
  {
    label: "Data",
    badge: "3",
    art: (
      <path d="M12.500 2.500c4 0 7 1.300 7 3s-3 3-7 3-7-1.300-7-3 3-3 7-3ZM5.500 5.500v13c0 1.700 3 3 7 3s7-1.300 7-3v-13" />
    ),
  },
  {
    label: "Comments",
    badge: "4",
    art: (
      <>
        <path d="M10 14.500 6.500 18v-3.500H5A2.500 2.500 0 0 1 2.500 12V5.500A2.500 2.500 0 0 1 5 3h11.500A2.500 2.500 0 0 1 19 5.500V9" />
        <path d="M13 10h7a2 2 0 0 1 2 2v5a2 2 0 0 1-2 2h-7a2 2 0 0 1-2-2v-5a2 2 0 0 1 2-2Z" />
      </>
    ),
  },
  {
    label: "Cloud",
    badge: "1",
    art: <path d="M6.500 18.500a4 4 0 0 1-.3-8 6 6 0 0 1 11.600 0 4 4 0 0 1-.3 8Z" />,
  },
  {
    label: "Tools",
    art: (
      <>
        <path d="M4.500 2.500v4l1.800 1.200L8.500 6.500v-4a4.200 4.200 0 0 1 .3 7.200V20a2 2 0 0 1-4.500 0V9.700a4.200 4.200 0 0 1 .2-7.200Z" />
        <path d="M16.500 2h3.500l-.5 5v4H17V7l-.5-5ZM14.500 14a3 3 0 0 1 1.500-3h4.500a3 3 0 0 1 1.500 3v5.500a2.500 2.500 0 0 1-2.500 2.500H17a2.500 2.500 0 0 1-2.500-2.500V14Z" />
      </>
    ),
  },
  {
    label: "More",
    art: (
      <g fill="currentColor" stroke="none">
        <circle cx="6" cy="12" r="1.500" />
        <circle cx="12" cy="12" r="1.500" />
        <circle cx="18" cy="12" r="1.500" />
      </g>
    ),
  },
];

function ActivityBar() {
  return (
    <nav className="flex w-[41px] shrink-0 flex-col items-center justify-between pt-1 pb-[5px] text-[#5f5f61]">
      <div className="flex flex-col gap-3">
        {ACTIVITIES.map((item) => (
          <button
            key={item.label}
            type="button"
            aria-label={item.label}
            className={clsx(
              "relative flex size-8 items-center justify-center rounded",
              item.label === "Data" && "bg-[#dcdcdf] text-[#3b3b3b]"
            )}
          >
            <ActivityIcon>{item.art}</ActivityIcon>
            {item.badge && (
              <span className="absolute -right-[2px] bottom-0 flex size-[14px] items-center justify-center rounded-full bg-[#0069cc] text-[9px] text-white">
                {item.badge}
              </span>
            )}
          </button>
        ))}
      </div>
      <button type="button" aria-label="Settings" className="flex size-8 items-center justify-center">
        <ActivityIcon>
          <path d="M10.300 2.500h3.400l.7 3 1.800 1 2.900-.9 1.700 2.900-2.200 2.100v2.800l2.200 2.100-1.700 2.900-2.900-.9-1.800 1-.7 3h-3.400l-.7-3-1.800-1-2.900.9-1.700-2.900 2.200-2.100v-2.800L3.200 8.500l1.700-2.900 2.900.9 1.800-1 .7-3Z" />
          <circle cx="12" cy="12" r="2.300" />
        </ActivityIcon>
      </button>
    </nav>
  );
}

/* ---------- chrome ---------- */

const LAYOUT_BUTTONS = [
  { label: "Primary side bar", icon: "columns", fill: "" },
  { label: "Panel", icon: "panel", fill: "" },
  { label: "Dashboard", icon: "frame", fill: "M4.500 9.500h7v5h-7Z" },
  { label: "Secondary side bar", icon: "frame", fill: "M9.500 1.500h3a2 2 0 0 1 2 2v9a2 2 0 0 1-2 2h-3Z" },
];

function TitleBar() {
  return (
    <header className="relative flex h-9 shrink-0 items-center justify-between pt-0.5 pr-[7px] pl-[78px] text-[12px] text-[#5f5f61]">
      <div className="flex items-center gap-[11px]">
        <div className="flex h-[22px] items-center rounded-md border border-[#e4e4e7] bg-white pr-px pl-[3px]">
          <Icon name="briefcase" className="mr-[3px]" />
          <button type="button" className="px-[7px]">
            Analyst
          </button>
          <button type="button" className="px-[6px]">
            Engineering
          </button>
          <button type="button" aria-pressed="true" className="h-[18px] rounded bg-[#dcdcde] px-[6px] text-[#202020]">
            Both
          </button>
        </div>
        <button type="button" aria-label="Help">
          <Icon name="help" size={16} />
        </button>
      </div>
      {/* stays in the middle of the window whatever the sides hold */}
      <button
        type="button"
        className="absolute left-1/2 flex h-[22px] w-[38%] -translate-x-1/2 items-center justify-center gap-[3px] rounded-md border border-[#e4e4e7] bg-white text-[#202020]"
      >
        <Icon name="search" size={14} className="text-[#5f5f61]" />
        Northing
      </button>
      <div className="flex items-center">
        {["edit", "folder", "graph"].map((name) => (
          <button key={name} type="button" aria-label={name} className="flex w-6 justify-center">
            <Icon name={name} size={16} />
          </button>
        ))}
        <span className="mx-[5px] h-4 w-px bg-[#e0e0e3]" />
        {LAYOUT_BUTTONS.map((b) => (
          <button key={b.label} type="button" aria-label={b.label} className="flex w-6 justify-center">
            <svg viewBox="0 0 16 16" width="16" height="16" fill="none" stroke="currentColor" aria-hidden="true">
              <path d={ICONS[b.icon]} />
              {b.fill && <path d={b.fill} fill="currentColor" stroke="none" />}
              {b.label === "Dashboard" && <path d="M4.500 1.500v13M11.500 1.500v13" />}
            </svg>
          </button>
        ))}
        <button type="button" aria-label="More" className="flex w-6 justify-center">
          <Dots size={16} />
        </button>
      </div>
    </header>
  );
}

const STATUS_ITEMS = [
  { icon: "database", text: "My database" },
  { icon: "briefcase", text: "Both" },
  { icon: "compass", text: "EPSG:2236, US ft" },
  { icon: "database", text: "DuckDB v1.5.6" },
  { icon: "check", text: "Spatial" },
  { icon: "table", text: "12" },
  { icon: "lock", text: "Sandboxed" },
];

function StatusItem({ icon, text }: { icon: string; text: string }) {
  return (
    <button type="button" className="flex items-center gap-1">
      <Icon name={icon} size={14} />
      {text}
    </button>
  );
}

function StatusBar() {
  return (
    <footer className="flex h-8 shrink-0 items-center justify-between pt-0.5 pr-3 pl-3 text-[12px] text-[#6b6b6d]">
      <div className="flex items-center gap-4">
        {STATUS_ITEMS.map((item) => (
          <StatusItem key={item.text} icon={item.icon} text={item.text} />
        ))}
      </div>
      <div className="flex items-center gap-4">
        <StatusItem icon="pin" text="37.76799° N, 122.64472° W" />
        <StatusItem icon="sparkle" text="gpt-6.1-sol" />
        <button type="button" aria-label="Tasks">
          <Icon name="checklist" size={14} />
        </button>
      </div>
    </footer>
  );
}

export default function App() {
  return (
    <div className="flex h-screen flex-col overflow-hidden bg-[#fafafd] font-['Inter',sans-serif]">
      <TitleBar />
      <div className="flex min-h-0 flex-1 pr-[5px] pl-1">
        <Editor />
        <div className="flex w-1 shrink-0 flex-col items-center justify-center gap-[3px]">
          <span className="size-[2px] bg-[#b5b5b7]" />
          <span className="size-[2px] bg-[#b5b5b7]" />
          <span className="size-[2px] bg-[#b5b5b7]" />
        </div>
        <aside className="flex w-[344px] shrink-0 rounded-lg border border-[#e4e4e7]">
          <Sidebar />
          <ActivityBar />
        </aside>
      </div>
      <StatusBar />
    </div>
  );
}
